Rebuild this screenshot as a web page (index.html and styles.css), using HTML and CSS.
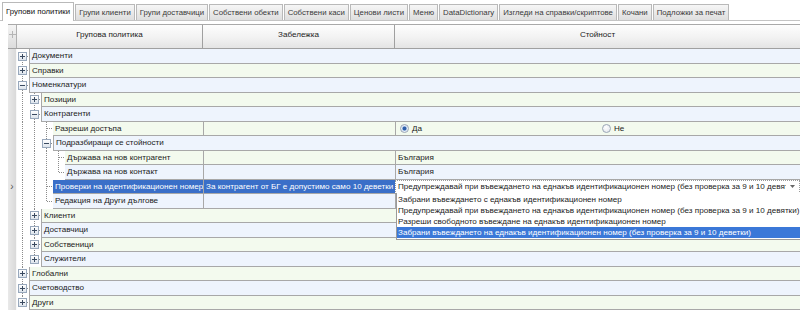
FILE: index.html
```html
<!DOCTYPE html>
<html lang="bg">
<head>
    <meta charset="UTF-8">
    <title>Групови политики</title>
    <link rel="stylesheet" href="styles.css">
</head>
<body>
    <div class="tabs">
        <div class="tab active">Групови политики</div>
        <div class="tab">Групи клиенти</div>
        <div class="tab">Групи доставчици</div>
        <div class="tab">Собствени обекти</div>
        <div class="tab">Собствени каси</div>
        <div class="tab">Ценови листи</div>
        <div class="tab">Меню</div>
        <div class="tab">DataDictionary</div>
        <div class="tab">Изгледи на справки/скриптове</div>
        <div class="tab">Кочани</div>
        <div class="tab">Подложки за печат</div>
    </div>

    <div class="grid">
        <div class="head">
            <div class="hind">
                <svg width="7" height="7" viewBox="0 0 7 7"><path d="M3.5 0v7M0 3.5h7" stroke="#b5b5b5" stroke-width="1"/></svg>
            </div>
            <div class="hcell c-name">Групова политика</div>
            <div class="hcell c-note">Забележка</div>
            <div class="hcell c-val">Стойност</div>
        </div>

        <div class="row blue group">
            <div class="namecol"><div class="ind"></div>
                <div class="sp first"><span class="exp plus"></span></div>
                <div class="cell">Документи</div></div>
        </div>
        <div class="row green group">
            <div class="namecol"><div class="ind"></div>
                <div class="sp tee"><span class="exp plus"></span></div>
                <div class="cell">Справки</div></div>
        </div>
        <div class="row blue group">
            <div class="namecol"><div class="ind"></div>
                <div class="sp tee"><span class="exp"></span></div>
                <div class="cell">Номенклатури</div></div>
        </div>
        <div class="row green group">
            <div class="namecol"><div class="ind"></div>
                <div class="sp pipe"></div>
                <div class="sp tee"><span class="exp plus"></span></div>
                <div class="cell">Позиции</div></div>
        </div>
        <div class="row blue group">
            <div class="namecol"><div class="ind"></div>
                <div class="sp pipe"></div>
                <div class="sp tee"><span class="exp"></span></div>
                <div class="cell">Контрагенти</div></div>
        </div>
        <div class="row green leaf">
            <div class="namecol"><div class="ind"></div>
                <div class="sp pipe"></div><div class="sp pipe"></div>
                <div class="sp tee"></div>
                <div class="cell">Разреши достъпа</div></div>
            <div class="cell note"></div>
            <div class="cell val radios">
                <div class="opt"><span class="radio on"></span>Да</div>
                <div class="opt"><span class="radio"></span>Не</div>
            </div>
        </div>
        <div class="row blue group">
            <div class="namecol"><div class="ind"></div>
                <div class="sp pipe"></div><div class="sp pipe"></div>
                <div class="sp tee"><span class="exp"></span></div>
                <div class="cell">Подразбиращи се стойности</div></div>
        </div>
        <div class="row green leaf">
            <div class="namecol"><div class="ind"></div>
                <div class="sp pipe"></div><div class="sp pipe"></div><div class="sp pipe"></div>
                <div class="sp tee"></div>
                <div class="cell">Държава на нов контрагент</div></div>
            <div class="cell note"></div>
            <div class="cell val">България</div>
        </div>
        <div class="row blue leaf">
            <div class="namecol"><div class="ind"></div>
                <div class="sp pipe"></div><div class="sp pipe"></div><div class="sp pipe"></div>
                <div class="sp ell"></div>
                <div class="cell">Държава на нов контакт</div></div>
            <div class="cell note"></div>
            <div class="cell val">България</div>
        </div>
        <div class="row green leaf sel">
            <div class="namecol"><div class="ind"><span class="arrow">›</span></div>
                <div class="sp pipe"></div><div class="sp pipe"></div>
                <div class="sp tee"></div>
                <div class="cell">Проверки на идентификационен номер</div></div>
            <div class="cell note">За контрагент от БГ е допустимо само 10 деветки</div>
            <div class="cell val combo">
                <span class="combo-text">Предупреждавай при въвеждането на еднакъв идентификационен номер (без проверка за 9 и 10 девятн</span>
                <svg class="combo-btn" width="5" height="3" viewBox="0 0 5 3"><path d="M0 0h5L2.5 3z" fill="#666"/></svg>
                <div class="dropdown">
                    <div class="item">Забрани въвеждането с еднакъв идентификационен номер</div>
                    <div class="item">Предупреждавай при въвеждането на еднакъв идентификационен номер (без проверка за 9 и 10 девятки)</div>
                    <div class="item">Разреши свободното въвеждане на еднакъв идентификационен номер</div>
                    <div class="item picked">Забрани въвеждането на еднакъв идентификационен номер (без проверка за 9 и 10 деветки)</div>
                </div>
            </div>
        </div>
        <div class="row blue leaf">
            <div class="namecol"><div class="ind"></div>
                <div class="sp pipe"></div><div class="sp pipe"></div>
                <div class="sp ell"></div>
                <div class="cell">Редакция на Други дългове</div></div>
            <div class="cell note"></div>
            <div class="cell val"></div>
        </div>
        <div class="row green group">
            <div class="namecol"><div class="ind"></div>
                <div class="sp pipe"></div>
                <div class="sp tee"><span class="exp plus"></span></div>
                <div class="cell">Клиенти</div></div>
        </div>
        <div class="row blue group">
            <div class="namecol"><div class="ind"></div>
                <div class="sp pipe"></div>
                <div class="sp tee"><span class="exp plus"></span></div>
                <div class="cell">Доставчици</div></div>
        </div>
        <div class="row green group">
            <div class="namecol"><div class="ind"></div>
                <div class="sp pipe"></div>
                <div class="sp tee"><span class="exp plus"></span></div>
                <div class="cell">Собственици</div></div>
        </div>
        <div class="row blue group">
            <div class="namecol"><div class="ind"></div>
                <div class="sp pipe"></div>
                <div class="sp ell"><span class="exp plus"></span></div>
                <div class="cell">Служители</div></div>
        </div>
        <div class="row green group">
            <div class="namecol"><div class="ind"></div>
                <div class="sp tee"><span class="exp plus"></span></div>
                <div class="cell">Глобални</div></div>
        </div>
        <div class="row blue group">
            <div class="namecol"><div class="ind"></div>
                <div class="sp tee"><span class="exp plus"></span></div>
                <div class="cell">Счетоводство</div></div>
        </div>
        <div class="row green group">
            <div class="namecol"><div class="ind"></div>
                <div class="sp ell"><span class="exp plus"></span></div>
                <div class="cell">Други</div></div>
        </div>
    </div>
</body>
</html>
```

FILE: styles.css
```css
body {
    margin: 0;
    background: #ffffff;
    color: #1b1b1b;
    font-family: "Liberation Sans", Arial, sans-serif;
    font-size: 8.1px;
    overflow: hidden;
}

/* Tab strip */
.tabs {
    display: flex;
    align-items: flex-end;
    gap: 1px;
    height: 18px;
    padding: 2px 0 0 2px;
    border-bottom: 1px solid #c4c4c4;
    font-size: 7.8px;
}

.tab {
    height: 15px;
    line-height: 15px;
    padding: 0 3px;
    border: 1px solid #b9b9b9;
    border-bottom: none;
    background: linear-gradient(#f6f6f6, #dedede);
    color: #3a3a3a;
    white-space: nowrap;
}

.tab.active {
    height: 18px;
    line-height: 17px;
    margin-bottom: -1px;
    background: #ffffff;
    color: #111111;
}

/* Tree grid */
.grid {
    margin: 3px 0 0 8px;
    border-top: 1px solid #a9a9a9;
}

.head {
    display: flex;
    height: 23px;
    border-bottom: 1px solid #a0a0a0;
    background: linear-gradient(#fdfdfd, #f2f2f2 55%, #e4e4e4);
}

.hind {
    width: 8px;
    flex: none;
    border-right: 1px solid #b0b0b0;
    display: flex;
    justify-content: center;
    padding-top: 6px;
    background: linear-gradient(#f4f4f4, #dcdcdc);
}

.hcell {
    flex: none;
    padding-top: 4px;
    text-align: center;
    line-height: 11px;
    border-right: 1px solid #a0a0a0;
    color: #222;
}

.c-name { width: 185px; }
.c-note { width: 191px; }
.c-val  { flex: 1; border-right: none; }

.row {
    display: flex;
    height: 14.5px;
}

.namecol {
    display: flex;
    width: 195px;
    flex: none;
}

.row.group .namecol { flex: 1; }

.ind {
    width: 8px;
    flex: none;
    border-right: 1px solid #f8f8f8;
    background: linear-gradient(90deg, #e9e9e9, #d9d9d9);
    display: flex;
    align-items: center;
    justify-content: center;
}

.arrow {
    color: #555;
    font-size: 10px;
    line-height: 10px;
}

/* indent spacers with dotted tree lines */
.sp {
    width: 12px;
    flex: none;
    display: flex;
    align-items: center;
    justify-content: center;
    background-repeat: no-repeat;
}

.pipe {
    background-image: repeating-linear-gradient(#8c8c8c 0 1px, transparent 1px 2px);
    background-size: 1px 100%;
    background-position: 5px 0;
}

.tee {
    background-image:
        repeating-linear-gradient(#8c8c8c 0 1px, transparent 1px 2px),
        repeating-linear-gradient(90deg, #8c8c8c 0 1px, transparent 1px 2px);
    background-size: 1px 100%, 6px 1px;
    background-position: 5px 0, 6px 50%;
}

.ell {
    background-image:
        repeating-linear-gradient(#8c8c8c 0 1px, transparent 1px 2px),
        repeating-linear-gradient(90deg, #8c8c8c 0 1px, transparent 1px 2px);
    background-size: 1px 50%, 6px 1px;
    background-position: 5px 0, 6px 50%;
}

.first {
    background-image:
        repeating-linear-gradient(#8c8c8c 0 1px, transparent 1px 2px),
        repeating-linear-gradient(90deg, #8c8c8c 0 1px, transparent 1px 2px);
    background-size: 1px 50%, 6px 1px;
    background-position: 5px 100%, 6px 50%;
}

/* expand / collapse box */
.exp {
    width: 7px;
    height: 7px;
    margin-right: 1px;
    border: 1px solid #98a8bc;
    background: linear-gradient(#ffffff, #dde4ec);
    display: flex;
    align-items: center;
    justify-content: center;
    position: relative;
}

.exp::before {
    content: '';
    width: 5px;
    height: 1px;
    background: #3a4a60;
}

.exp.plus::after {
    content: '';
    position: absolute;
    left: 3px;
    top: 1px;
    width: 1px;
    height: 5px;
    background: #3a4a60;
}

.cell {
    display: flex;
    align-items: center;
    min-width: 0;
    padding-left: 2px;
    box-sizing: border-box;
    border-bottom: 1px solid #a8a8a8;
    white-space: nowrap;
    overflow: hidden;
}

.namecol .cell { flex: 1; }
.row.group .namecol .cell { border-left: 1px solid #a8a8a8; }

.note {
    width: 192px;
    flex: none;
    border-left: 1px solid #a8a8a8;
}

.val {
    flex: 1;
    border-left: 1px solid #a8a8a8;
}

.row.blue .cell  { background: #eef4fd; }
.row.green .cell { background: #f3faee; }

.row.sel .namecol .cell,
.row.sel .note {
    background: #3a6fc8;
    color: #ffffff;
}

/* radio options */
.radios { padding-left: 0; }

.opt {
    flex: 1;
    display: flex;
    align-items: center;
    gap: 3px;
    padding-left: 4px;
}

.radio {
    width: 7px;
    height: 7px;
    border: 1px solid #9aa6b6;
    border-radius: 50%;
    background: radial-gradient(circle at 40% 35%, #ffffff, #dfe4ea);
}

.radio.on {
    background: radial-gradient(circle, #2f5fa8 0 1.6px, #a9c2e4 2.2px, #e8eef6 3px);
}

/* combo in the focused row */
.combo {
    overflow: visible;
    position: relative;
    justify-content: space-between;
    padding-right: 4px;
    border: 1px dotted #9a9a9a;
}

.row.green .combo { background: #ffffff; }

.combo-text {
    overflow: hidden;
    min-width: 0;
}

.combo-btn { flex: none; margin-left: 4px; }

.dropdown {
    position: absolute;
    top: 100%;
    left: 0;
    right: -4px;
    z-index: 5;
    background: #ffffff;
    border-left: 1px solid #9a9a9a;
    border-bottom: 1px solid #9a9a9a;
    padding: 1px 0;
    color: #1b1b1b;
}

.item {
    height: 11px;
    line-height: 11px;
    padding-left: 1px;
    white-space: nowrap;
}

.item.picked {
    background: #3b78d8;
    color: #ffffff;
}
```
